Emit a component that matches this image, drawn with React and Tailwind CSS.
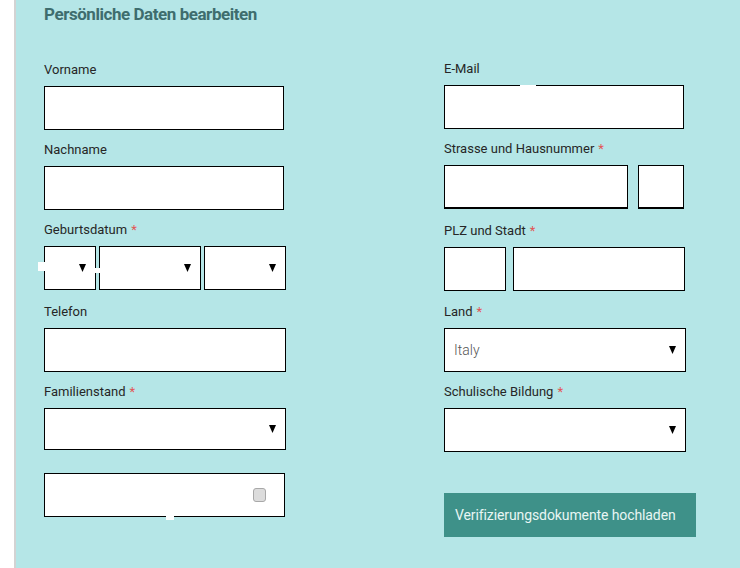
import React from "react";

const font = { fontFamily: "Roboto, 'Liberation Sans', Arial, sans-serif" };

function Arrow() {
  return (
    <svg width="7" height="8" viewBox="0 0 7 8" className="absolute right-[9px] top-1/2 -translate-y-1/2">
      <polygon points="0,0 7,0 3.5,8" fill="#000" />
    </svg>
  );
}

function Label({ children, req }) {
  return (
    <div className="h-[18px] leading-[16px] text-[13px] text-[#262626] mb-[6px] whitespace-nowrap">
      {children}
      {req && <span className="text-[#e25555] ml-[4px]">*</span>}
    </div>
  );
}

function Input({ className = "" }) {
  return <div className={"h-[44px] bg-white border border-black " + className} />;
}

function Select({ className = "", children }) {
  return (
    <div className={"relative h-[44px] bg-white border border-black flex items-center " + className}>
      {children}
      <Arrow />
    </div>
  );
}

export default function App() {
  return (
    <div className="flex w-[740px] h-[568px] overflow-hidden bg-white" style={font}>
      <div className="w-[14px] shrink-0 bg-white" />
      <div className="w-[2px] shrink-0 bg-[#d3d3d3]" />
      <div className="flex-1 bg-[#b5e6e7] pl-[28px]">
        <h1 className="text-[17px] font-bold tracking-[-0.45px] text-[#3e6d6e] leading-[20px] pt-[4px] h-[61px]">
          Persönliche Daten bearbeiten
        </h1>
        <div className="flex">
          {/* left column */}
          <div className="w-[242px] flex flex-col pt-[1px]">
            <div>
              <Label>Vorname</Label>
              <Input className="w-[240px]" />
            </div>
            <div className="mt-[12px]">
              <Label>Nachname</Label>
              <Input className="w-[240px]" />
            </div>
            <div className="mt-[12px]">
              <Label req>Geburtsdatum</Label>
              <div className="relative flex gap-[3px]">
                <Select className="w-[52px]" />
                <Select className="w-[102px]" />
                <Select className="w-[82px]" />
                <div className="absolute left-[-6px] top-[16px] w-[8px] h-[9px] bg-white" />
                <div className="absolute left-[49px] top-[22px] w-[8px] h-[5px] bg-white" />
              </div>
            </div>
            <div className="mt-[14px]">
              <Label>Telefon</Label>
              <Input className="w-[242px]" />
            </div>
            <div className="mt-[12px]">
              <Label req>Familienstand</Label>
              <Select className="w-[242px] !h-[42px]" />
            </div>
            <div className="relative mt-[23px] w-[241px] h-[44px] bg-white border border-black flex items-center justify-end pr-[18px]">
              <div className="w-[13px] h-[14px] rounded-[3px] bg-[#dcdcdc] border border-[#a8a8a8]" />
              <div className="absolute left-[121px] bottom-[-4px] w-[8px] h-[5px] bg-white" />
            </div>
          </div>
          {/* right column */}
          <div className="ml-[158px] w-[242px] flex flex-col">
            <div className="relative">
              <Label>E-Mail</Label>
              <Input className="w-[240px]" />
              <div className="absolute left-[76px] top-[24px] w-[16px] h-[1px] bg-white" />
            </div>
            <div className="mt-[12px]">
              <Label req>Strasse und Hausnummer</Label>
              <div className="flex gap-[10px]">
                <Input className="w-[184px] !border-b-2" />
                <Input className="w-[46px] !border-b-2" />
              </div>
            </div>
            <div className="mt-[14px]">
              <Label req>PLZ und Stadt</Label>
              <div className="flex gap-[7px]">
                <Input className="w-[62px]" />
                <Input className="w-[172px]" />
              </div>
            </div>
            <div className="mt-[13px]">
              <Label req>Land</Label>
              <Select className="w-[242px]">
                <span className="pl-[9px] text-[14px] font-light text-[#555]">Italy</span>
              </Select>
            </div>
            <div className="mt-[12px]">
              <Label req>Schulische Bildung</Label>
              <Select className="w-[242px]" />
            </div>
            <button className="mt-[41px] w-[252px] h-[44px] bg-[#3e9189] text-[#e8f6f4] text-[14px] tracking-[-0.1px] text-left pl-[11px]">
              Verifizierungsdokumente hochladen
            </button>
          </div>
        </div>
      </div>
    </div>
  );
}
